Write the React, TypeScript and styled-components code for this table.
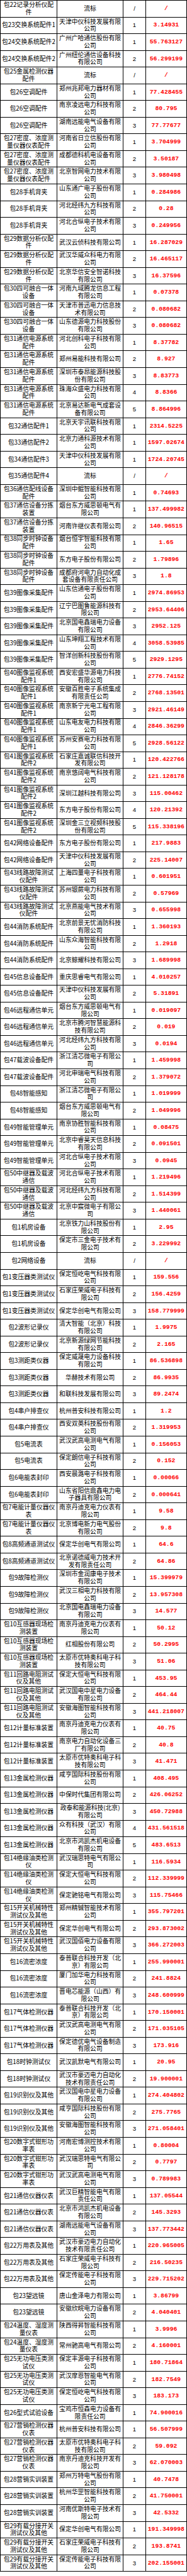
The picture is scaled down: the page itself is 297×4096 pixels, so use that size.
import React from "react";
import styled, { createGlobalStyle } from "styled-components";

const GlobalStyle = createGlobalStyle`
  html, body { margin: 0; padding: 0; background: #ffffff; }
  #root { width: 297px; }
`;

const RAW = `包22记录分析仪配^件|流标|/|/
包23交换系统配件1|天津中仪科技发展有限^公司|1|3.14931
包24交换系统配件2|广州广哈通信股份有限^公司|1|55.763127
包24交换系统配件2|广州纽伦通信设备科技^有限公司|2|56.299199
包25金属检测仪器^配件|流标|/|/
包26空调配件|郑州兆邦电力器材有限^公司|1|77.428455
包26空调配件|南京凌远电力科技有限^公司|2|80.795
包26空调配件|湖南远能电气设备有限^公司|3|77.77677
包27密度、浓度测^量仪器仪表配件|河南省日立信股份有限^公司|1|3.704999
包27密度、浓度测^量仪器仪表配件|成都德科机电设备有限^公司|2|3.50187
包27密度、浓度测^量仪器仪表配件|北京智网电力技术有限^公司|3|3.980498
包28手机背夹|山东通广电子股份有限^公司|1|0.284986
包28手机背夹|河北经纬九方科技有限^公司|2|0.28
包28手机背夹|河北合纵电子技术有限^公司|3|0.249956
包29数据分析仪配^件|武汉云侦科技有限公司|1|16.287029
包29数据分析仪配^件|武汉华威众科电力有限^公司|2|16.465117
包29数据分析仪配^件|北京华信安全智诺科技^有限公司|3|16.37596
包30四可融合一体^设备|河南九域腾龙信息工程^有限公司|1|0.07378
包30四可融合一体^设备|天津市普迅电力信息技^术有限公司|2|0.080682
包30四可融合一体^设备|山东德源电力科技股份^有限公司|3|0.080682
包31通信电源系统^配件|河北创科电子科技有限^公司|1|8.37782
包31通信电源系统^配件|郑州易能科技有限公司|2|8.927
包31通信电源系统^配件|深圳市泰昂能源科技股^份有限公司|3|8.83773
包31通信电源系统^配件|珠海众盛电力科技有限^公司|4|8.8366
包31通信电源系统^配件|北京易达新电气成套设^备有限公司|5|8.864996
包32通信配件1|北京天宇讯联科技有限^公司|1|2314.5225
包33通信配件2|北京力通科源技术有限^公司|1|1597.02674
包34通信配件3|天津中仪科技发展有限^公司|1|1724.20745
包35通信配件4|流标|/|/
包36通信配线设备^配件|深圳中鲲智能科技有限^公司|1|0.74693
包37通信设备分拣^装置|烟台东方威思顿电气有^限公司|1|137.499982
包37通信设备分拣^装置|河南许继仪表有限公司|2|140.96515
包38同步时钟设备^配件|烟台恒宇智能科技有限^公司|1|1.65
包38同步时钟设备^配件|东方电子股份有限公司|2|1.79896
包38同步时钟设备^配件|成都府河电力自动化成^套设备有限责任公司|3|1.8
包39图像采集配件|山东信通电子股份有限^公司|1|2974.86953
包39图像采集配件|辽宁巴图鲁能源科技有^限公司|2|2953.64406
包39图像采集配件|北京国电鑫瑞电力设备^有限公司|3|2952.125
包39图像采集配件|山东坤翔工程技术有限^公司|4|3058.53985
包39图像采集配件|智洋创新科技股份有限^公司|5|2929.1295
包40图像监视系统^配件1|西安宏盛华源电力科技^有限公司|1|2776.74152
包40图像监视系统^配件1|安徽百胜电子系统集成^有限责任公司|2|2768.13501
包40图像监视系统^配件1|南京新宁光电工程有限^公司|3|2921.46149
包40图像监视系统^配件1|山东电友电力科技有限^公司|4|2846.36299
包40图像监视系统^配件1|苏州安赛电力科技有限^公司|5|2928.56122
包41图像监视系统^配件2|石家庄嘉诚联信科技开^发有限公司|1|120.422766
包41图像监视系统^配件2|南京悠阔电气科技有限^公司|2|121.128178
包41图像监视系统^配件2|深圳江越科技有限公司|3|115.00462
包41图像监视系统^配件2|东方电子股份有限公司|4|120.21392
包41图像监视系统^配件2|深圳金三立视频科技股^份有限公司|5|115.338196
包42网络设备配件|东方电子股份有限公司|1|217.9883
包42网络设备配件|天津中仪科技发展有限^公司|2|225.14007
包43线路故障测试^仪配件|上海四量电子科技有限^公司|1|0.601951
包43线路故障测试^仪配件|苏州银蕨电力科技有限^公司|2|0.57969
包43线路故障测试^仪配件|北京燕能电气技术有限^公司|3|0.655998
包44消防系统配件|北京前景无忧消防科技^有限公司|1|1.360193
包44消防系统配件|山东众海智能科技有限^公司|2|1.2918
包44消防系统配件|北京鲸耀科技有限公司|3|1.689998
包45信息设备配件|重庆思睿电气有限公司|1|4.010257
包45信息设备配件|天津中仪科技发展有限^公司|2|5.31891
包46远程通信单元|烟台东方威思顿电气有^限公司|1|0.019097
包46远程通信单元|北京市腾河智慧能源科^技有限公司|2|0.019
包46远程通信单元|河北经纬九方科技有限^公司|3|0.0194
包47载波设备配件|浙江清芯微电子有限公^司|1|1.459998
包47载波设备配件|河北申瑞电气科技有限^公司|2|1.379072
包48智能感知|浙江清芯微电子有限公^司|1|1.019999
包48智能感知|烟台东方威思顿电气有^限公司|2|1.049996
包49智能管理单元|南京协胜智能科技有限^公司|1|0.08475
包49智能管理单元|北京中睿昊天信息科技^有限公司|2|0.091501
包49智能管理单元|河北合纵电子技术有限^公司|3|0.0945
包50中继器及载波^通信|河北合纵电子技术有限^公司|1|1.219496
包50中继器及载波^通信|河北经纬九方科技有限^公司|2|1.514399
包50中继器及载波^通信|北京中宸微电子有限公^司|3|1.440061
包1机房设备|北京铁力山科技股份有^限公司|1|2.95
包1机房设备|保定市三金电子技术有^限公司|2|3.229992
包2网络设备|流标|/|/
包1变压器类测试仪|保定恒屹电气科技有限^公司|1|159.556
包1变压器类测试仪|石家庄荣威电子科技有^限公司|2|156.4259
包1变压器类测试仪|保定华创电气有限公司|3|158.779999
包2波形记录仪|清大智能（北京）科技^有限公司|1|1.9975
包2波形记录仪|北京新源绿网节能科技^有限公司|2|2.165
包3测距类仪器|保定威晟电力设备科技^有限公司|1|86.536898
包3测距类仪器|华赫技术有限公司|2|86.9935
包3测距类仪器|和联科技发展有限公司|3|89.2474
包4串户排查仪|杭州普安科技有限公司|1|1.2
包4串户排查仪|西安双英科技股份有限^公司|2|1.319953
包5电流表|武汉武高电测电气有限^公司|1|0.156053
包5电流表|保定朗信电子科技有限^公司|2|0.152
包6电能表封印|西安晨潞电子科技有限^公司|1|0.00066
包6电能表封印|山东省阳信鼎鑫电力电^子器具有限公司|2|0.000641
包7电能计量仪器仪^表|南京丹迪克电力仪表有^限公司|1|9.58
包7电能计量仪器仪^表|北京博电新力电气股份^有限公司|2|9.8
包8高频通道测试仪|保定华创电气有限公司|1|64.6
包8高频通道测试仪|北京诺德威电力技术开^发有限责任公司|2|64.86
包9故障检测仪|深圳市金润康电子技术^有限公司|1|15.399979
包9故障检测仪|武汉三相电力科技有限^公司|2|13.957308
包9故障检测仪|北京国电鑫瑞电力设备^有限公司|3|14.577
包10互感器现场检^测装置|南京丹迪克电力仪表有^限公司|1|50.12
包10互感器现场检^测装置|红相股份有限公司|2|50.2995
包10互感器现场检^测装置|太原市优特奥科电子科^技有限公司|3|51.06
包11回路电阻测试^仪及其他|保定大恒电气科技有限^公司|1|453.95
包11回路电阻测试^仪及其他|武汉国电中星电力设备^有限公司|2|464.44
包11回路电阻测试^仪及其他|安徽海图智能科技有限^公司|3|441.218007
包12计量标准装置|南京丹迪克电力仪表有^限公司|1|40.75
包12计量标准装置|南京电力自动化设备三^厂有限公司|2|40.8
包12计量标准装置|太原市优特奥科电子科^技有限公司|3|41.471
包13金属检测仪器|咸亨国际科技股份有限^公司|1|408.495
包13金属检测仪器|中保时代集团有限公司|2|426.06252
包13金属检测仪器|政泰和能源科技(北京)^有限公司|3|450.72988
包13金属检测仪器|众有科技（武汉）有限^公司|4|431.561518
包13金属检测仪器|北京市鸿凯杰机电设备^有限公司|5|483.6513
包14绝缘油类检测^仪|武汉瑞思特电气有限公^司|1|116.5934
包14绝缘油类检测^仪|保定大恒电气科技有限^公司|2|112.339999
包14绝缘油类检测^仪|保定驰铭电气有限公司|3|115.75466
包15开关机械特性^测试仪及其他|郑州精铖智能技术有限^公司|1|355.797201
包15开关机械特性^测试仪及其他|保定华创电气有限公司|2|293.873002
包15开关机械特性^测试仪及其他|武汉国佰电力设备有限^公司|3|366.272003
包16流密浓度|泰普联合科技开发（北^京）有限公司|1|255.990001
包16流密浓度|厦门加华电力科技有限^公司|2|241.8824
包16流密浓度|晋电芯能源（山西）有^限公司|3|248.600999
包17气体检测仪器|泰普联合科技开发（北^京）有限公司|1|170.150001
包17气体检测仪器|武汉武高电测电气有限^公司|2|171.035105
包17气体检测仪器|保定德优电气设备制造^有限公司|3|173.916
包18时钟测试仪|武汉凯默电气有限公司|1|20.95
包18时钟测试仪|武汉市豪迈电力自动化^技术有限责任公司|2|19.900001
包19识别仪及其他|武汉国电中星电力设备^有限公司|1|274.404802
包19识别仪及其他|咸亨国际科技股份有限^公司|2|275.7765
包19识别仪及其他|安徽海图智能科技有限^公司|3|271.058401
包20数字式钳形功^率表|河南宏博测控技术有限^公司|1|0.80004
包20数字式钳形功^率表|武汉瑞思特电气有限公^司|2|0.7797
包20数字式钳形功^率表|武汉武高电测电气有限^公司|3|0.789983
包21通信仪器仪表|武汉巨精智能电气有限^责任公司|1|137.05544
包21通信仪器仪表|北京市鸿凯杰机电设备^有限公司|2|145.3293
包21通信仪器仪表|湖南远能电气设备有限^公司|3|137.773442
包22万用表及其他|武汉市豪迈电力自动化^技术有限责任公司|1|220.965005
包22万用表及其他|石家庄荣威电子科技有^限公司|2|216.50235
包22万用表及其他|保定传能电子科技有限^公司|3|229.715202
包23望远镜|唐山金泽电力有限公司|1|3.86799
包23望远镜|安徽欣皖电力设备有限^公司|2|4.040401
包24温度、湿度测^量仪表|陕西得昇智能科技有限^公司|1|3.9996
包24温度、湿度测^量仪表|常州驰高电气有限公司|2|4.160001
包25无功电压类测^试仪|保定丰源电子科技有限^公司|1|180.71864
包25无功电压类测^试仪|武汉摩恩智能电气有限^公司|2|182.7549
包25无功电压类测^试仪|保定恒屹电气科技有限^公司|3|183.173
包26型式试验设备|宝鸡市恒森电力设备有^限责任公司|1|74.900016
包27营销检测仪器^仪表|杭州普安科技有限公司|1|56.507999
包27营销检测仪器^仪表|太原市优特奥科电子科^技有限公司|2|59.092
包27营销检测仪器^仪表|南京丹迪克科技开发有^限公司|3|62.070003
包28营销实训装置|郑州万特电气股份有限^公司|1|40.7478
包28营销实训装置|杭州华罡智能科技有限^公司|2|41.750001
包28营销实训装置|河南优斯特电子技术有^限公司|3|42.5332
包29有载分接开关^测试仪及其他|保定华创电气有限公司|1|191.349998
包29有载分接开关^测试仪及其他|石家庄荣威电子科技有^限公司|2|193.8741
包29有载分接开关^测试仪及其他|保定传能电子科技有限^公司|3|202.155001`;

type Row = { pkg: string[]; company: string[]; rank: string; price: string };

const ROWS: Row[] = RAW.split("\n").map((line) => {
  const [a, b, c, d] = line.split("|");
  return { pkg: a.split("^"), company: b.split("^"), rank: c, price: d };
});

const Table = styled.table`
  border-collapse: collapse;
  table-layout: fixed;
  width: 297px;
  margin: 0;
  background: #ffffff;
`;

const PackageCol = styled.col`
  width: 89.8px;
`;

const CompanyCol = styled.col`
  width: 105.6px;
`;

const RankCol = styled.col`
  width: 35.2px;
`;

const PriceCol = styled.col`
  width: 65.5px;
`;

const TableRow = styled.tr`
  height: 26.56px;
`;

const BaseCell = styled.td`
  border: 1px solid #000000;
  padding: 0;
  text-align: center;
  vertical-align: middle;
  white-space: nowrap;
  overflow: hidden;
  color: #000000;
  font-family: "Noto Sans CJK SC", "Noto Sans", sans-serif;
  font-size: 9.8px;
  line-height: 11.8px;
`;

const PackageCell = styled(BaseCell)``;

const CompanyCell = styled(BaseCell)``;

const RankCell = styled(BaseCell)`
  font-family: "Liberation Sans", "Noto Sans", sans-serif;
  font-size: 9.6px;
`;

const PriceCell = styled(BaseCell)`
  color: #ff0000;
  font-family: "Liberation Mono", "DejaVu Sans Mono", monospace;
  font-weight: bold;
  font-size: 9.7px;
`;

const Line = styled.span`
  display: block;
`;

const Lines: React.FC<{ lines: string[] }> = ({ lines }) => (
  <>
    {lines.map((t, i) => (
      <Line key={i}>{t}</Line>
    ))}
  </>
);

export default function App() {
  return (
    <>
      <GlobalStyle />
      <Table>
        <colgroup>
          <PackageCol />
          <CompanyCol />
          <RankCol />
          <PriceCol />
        </colgroup>
        <tbody>
          {ROWS.map((r, i) => (
            <TableRow key={i}>
              <PackageCell>
                <Lines lines={r.pkg} />
              </PackageCell>
              <CompanyCell>
                <Lines lines={r.company} />
              </CompanyCell>
              <RankCell>{r.rank}</RankCell>
              <PriceCell>{r.price}</PriceCell>
            </TableRow>
          ))}
        </tbody>
      </Table>
    </>
  );
}
